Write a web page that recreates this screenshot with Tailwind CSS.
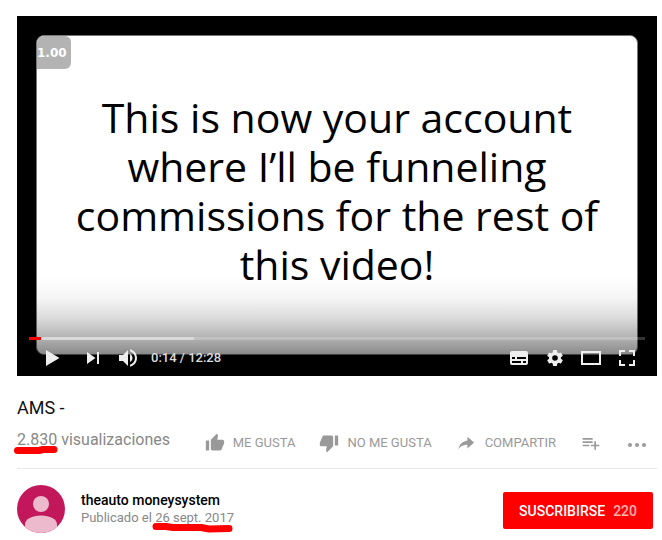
<!DOCTYPE html>
<html lang="es">
<head>
    <meta charset="UTF-8">
    <meta name="viewport" content="width=device-width, initial-scale=1.0">
    <title>AMS - YouTube</title>
    <script src="https://cdn.jsdelivr.net/npm/@tailwindcss/browser@4"></script>
</head>
<body class="bg-white font-[Roboto,sans-serif] text-[#111]">
<main class="pt-4 pl-[17px] pr-[5px]">

    <!-- Player -->
    <section class="relative aspect-video bg-black px-[19px] pt-[19px] pb-[21px]">
        <div class="relative flex h-full items-center justify-center overflow-hidden rounded-lg border border-[#777] bg-white px-8">
            <p class="pb-2 text-center font-['Open_Sans',sans-serif] text-[41px] leading-[49px] text-black">This is now your account<br>where I’ll be funneling<br>commissions for the rest of<br>this video!</p>
            <span class="absolute top-0 left-0 flex h-[33px] w-[34px] items-center rounded-r-md bg-[#b3b3b3] font-['DejaVu_Sans',sans-serif] text-xs font-bold text-white">1.00</span>
        </div>

        <div class="absolute inset-x-0 bottom-0 h-25 bg-[linear-gradient(to_bottom,transparent,rgb(0_0_0/0.04)_22%,rgb(0_0_0/0.14)_42%,rgb(0_0_0/0.3)_62%,rgb(0_0_0/0.48)_80%,rgb(0_0_0/0.6))]"></div>

        <!-- Controls -->
        <div class="absolute inset-x-3 bottom-0">
            <div class="relative h-[3px] bg-white/20">
                <div class="absolute inset-y-0 left-0 bg-[#d9d9d9]" style="width: 26.8%"></div>
                <div class="absolute inset-y-0 left-0 bg-[#f00]" style="width: 2%"></div>
            </div>
            <div class="flex h-9 items-center text-[#eee]">
                <button type="button" aria-label="Reproducir" class="flex w-[46px] justify-center">
                    <svg class="size-9" viewBox="0 0 36 36" fill="currentColor"><path d="M12 10l13.500 8L12 26z"/></svg>
                </button>
                <button type="button" aria-label="Siguiente">
                    <svg class="size-9" viewBox="0 0 36 36" fill="currentColor"><path d="M12 24l8.500-6L12 12v12zM22 12v12h2V12h-2z"/></svg>
                </button>
                <button type="button" aria-label="Silenciar">
                    <svg class="size-9" viewBox="0 0 36 36" fill="currentColor"><path d="M8 21h4l5 5V10l-5 5H8v6zM19 14v8c1.480-.680 2.500-2.230 2.500-4s-1.020-3.290-2.500-4zM19 11.290c2.890.860 5 3.540 5 6.710s-2.110 5.850-5 6.710v2.060c4.010-.910 7-4.490 7-8.770s-2.990-7.860-7-8.770v2.060z"/></svg>
                </button>
                <span class="pl-1 text-[13px] font-medium text-[#ddd]">0:14 / 12:28</span>
                <div class="ml-auto flex">
                    <button type="button" aria-label="Subtítulos">
                        <svg class="size-9" viewBox="0 0 36 36" fill="currentColor"><path fill-rule="evenodd" d="M11 11h14a2 2 0 0 1 2 2v10a2 2 0 0 1-2 2H11a2 2 0 0 1-2-2V13a2 2 0 0 1 2-2zM11 17v2h3v-2h-3zM16 17v2h9v-2h-9zM11 21v2h9v-2h-9zM22 21v2h3v-2h-3z"/></svg>
                    </button>
                    <button type="button" aria-label="Configuración">
                        <svg class="size-9" viewBox="0 0 36 36" fill="currentColor"><path d="M23.940 18.780c.030-.250.050-.510.050-.780s-.020-.520-.050-.780l1.680-1.320c.150-.120.190-.330.090-.510l-1.600-2.760c-.090-.170-.310-.240-.480-.170l-1.990.800c-.410-.320-.860-.580-1.350-.780l-.300-2.120c-.020-.190-.190-.330-.390-.330h-3.200c-.200 0-.360.140-.390.330l-.300 2.120c-.480.200-.930.470-1.350.780l-1.990-.800c-.180-.070-.390 0-.480.170l-1.600 2.760c-.100.170-.050.390.090.510l1.680 1.320c-.030.250-.050.520-.050.780s.020.520.050.780l-1.680 1.320c-.150.120-.190.330-.090.510l1.600 2.760c.090.170.310.240.480.170l1.990-.800c.410.320.860.580 1.350.780l.300 2.120c.020.190.190.330.390.330h3.200c.200 0 .360-.140.390-.330l.300-2.120c.480-.200.930-.470 1.350-.780l1.990.800c.180.070.390 0 .480-.170l1.600-2.760c.090-.170.050-.390-.090-.510l-1.680-1.320zM18 20.800a2.800 2.800 0 1 1 0-5.600 2.800 2.800 0 0 1 0 5.600z"/></svg>
                    </button>
                    <button type="button" aria-label="Modo cine">
                        <svg class="size-9" viewBox="0 0 36 36" fill="currentColor"><path fill-rule="evenodd" d="M8 11h20v14H8zM10 13v10h16V13z"/></svg>
                    </button>
                    <button type="button" aria-label="Pantalla completa">
                        <svg class="size-9" viewBox="0 0 36 36" fill="currentColor"><path d="M10 16h2v-4h4v-2h-6zM20 10v2h4v4h2v-6zM24 24h-4v2h6v-6h-2zM12 20h-2v6h6v-2h-4z"/></svg>
                    </button>
                </div>
            </div>
        </div>
    </section>

    <!-- Title, views and actions -->
    <section class="border-b border-[#e8e8e8] pt-5 pb-[15px]">
        <h1 class="text-lg leading-6">AMS -</h1>
        <div class="mt-2 flex h-[25px] items-center text-[13px] text-[#999]">
            <p class="pb-px text-base leading-5 text-[#888]"><span class="relative">2.830<svg class="absolute top-4 -left-1 h-2 w-12" viewBox="0 0 48 8" fill="none" stroke="#f00" stroke-width="7" stroke-linecap="round" stroke-linejoin="round"><path d="M4.500 4.500L26 4.500L30 3.500L41 3.500"/></svg></span> visualizaciones</p>
            <div class="ml-auto flex items-center pt-[5px]">
                <button type="button" class="mr-6 flex items-center gap-2">
                    <svg class="size-5" viewBox="0 0 24 24" fill="currentColor"><path d="M1 21h4V9H1v12zm22-11c0-1.100-.900-2-2-2h-6.310l.950-4.570.030-.320c0-.410-.170-.790-.440-1.060L14.170 1 7.590 7.590C7.220 7.950 7 8.450 7 9v10c0 1.100.900 2 2 2h9c.830 0 1.540-.500 1.840-1.220l3.020-7.050c.090-.230.140-.470.140-.730v-2z"/></svg>
                    ME GUSTA
                </button>
                <button type="button" class="mr-[25px] flex items-center gap-2">
                    <svg class="size-5" viewBox="0 0 24 24" fill="currentColor"><path d="M15 3H6c-.830 0-1.540.500-1.840 1.220l-3.020 7.050c-.090.230-.140.470-.140.730v2c0 1.100.900 2 2 2h6.310l-.950 4.570-.030.320c0 .410.170.790.440 1.060L9.830 23l6.590-6.590c.360-.360.580-.860.580-1.410V5c0-1.100-.900-2-2-2zm4 0v12h4V3h-4z"/></svg>
                    NO ME GUSTA
                </button>
                <button type="button" class="mr-[25px] flex items-center gap-2">
                    <svg class="size-5" viewBox="0 0 24 24" fill="currentColor"><path d="M12.500 4.500v4.500C6 10 3 14.500 1.500 19.500c3.500-4.300 6.500-5.500 11-5.500v4.500l8-7z"/></svg>
                    COMPARTIR
                </button>
                <button type="button" aria-label="Guardar" class="mr-6">
                    <svg class="size-5" viewBox="0 0 24 24" fill="currentColor"><path d="M14 10H2v2h12v-2zm0-4H2v2h12V6zm4 8v-4h-2v4h-4v2h4v4h2v-4h4v-2h-4zM2 16h8v-2H2v2z"/></svg>
                </button>
                <button type="button" aria-label="Más acciones" class="mr-2 pt-1">
                    <svg class="size-6" viewBox="0 0 24 24" fill="currentColor"><circle cx="5" cy="12" r="2"/><circle cx="12" cy="12" r="2"/><circle cx="19" cy="12" r="2"/></svg>
                </button>
            </div>
        </div>
    </section>

    <!-- Channel -->
    <section class="flex items-center pt-4">
        <svg class="size-12 shrink-0 rounded-full" viewBox="0 0 48 48"><path fill="#c2185b" d="M0 0h48v48H0z"/><g fill="#edb9cd"><circle cx="24" cy="19" r="8"/><path d="M8 48V39.500C8 34 15 30.500 24 30.500S40 34 40 39.500V48z"/></g></svg>
        <div class="ml-4">
            <a href="#" class="block text-sm leading-[18px] font-medium text-black">theauto moneysystem</a>
            <p class="text-[13px] leading-[18px] text-[#888]">Publicado el <span class="relative">26 sept. 2017<svg class="absolute top-3 -left-1 h-3 w-[84px]" viewBox="0 0 84 12" fill="none" stroke="#f00" stroke-width="7" stroke-linecap="round" stroke-linejoin="round"><path d="M5 4.500L15 4.500L22 5.500L50 5.500L58 7L78 6.500"/></svg></span></p>
        </div>
        <button type="button" class="mt-[3px] mr-1 ml-auto flex h-[37px] items-center gap-2 rounded-xs bg-[#f00] px-4 text-sm font-medium text-white">SUSCRIBIRSE <span class="text-[#ffb3b3]">220</span></button>
    </section>

</main>
</body>
</html>
